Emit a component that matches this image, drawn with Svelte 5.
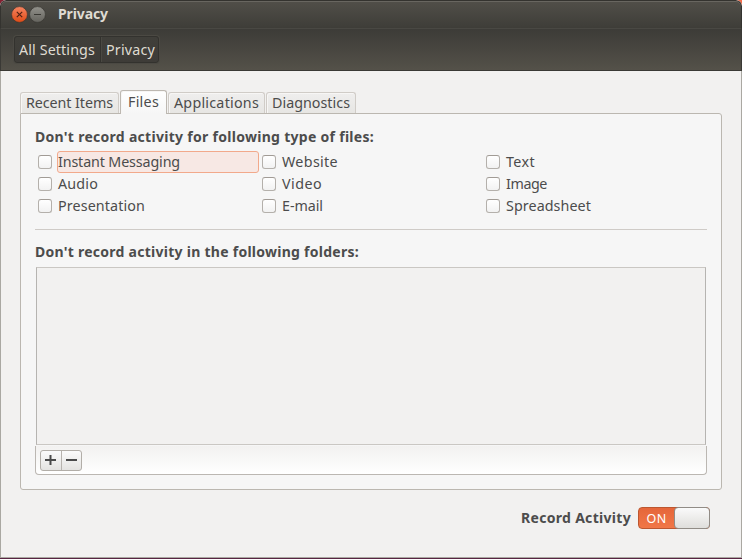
<script>
  const tabs = [
    { name: 'Recent Items', width: 99, text: 87 },
    { name: 'Files', width: 47, text: 31 },
    { name: 'Applications', width: 97, text: 85 },
    { name: 'Diagnostics', width: 90, text: 78 }
  ];
  const types = [
    ['Instant Messaging', 122], ['Website', 56], ['Text', 29],
    ['Audio', 40], ['Video', 40], ['Image', 41],
    ['Presentation', 87], ['E-mail', 41], ['Spreadsheet', 85]
  ];
  let active = $state('Files');
  let focused = $state('Instant Messaging');

  // Adjusts tracking so that a label fills its intended width.
  function fit(node, width) {
    const natural = node.getBoundingClientRect().width;
    const gap = (width - natural) / node.textContent.length;
    node.style.letterSpacing = `${gap}px`;
  }
</script>

<div class="window">
  <header class="titlebar">
    <svg class="buttons" width="36" height="18" viewBox="0 0 36 18">
      <defs>
        <linearGradient id="close" x1="0" y1="0" x2="0" y2="1"><stop offset="0" stop-color="#f68461" /><stop offset="1" stop-color="#df4b16" /></linearGradient>
        <linearGradient id="min" x1="0" y1="0" x2="0" y2="1"><stop offset="0" stop-color="#92918b" /><stop offset="1" stop-color="#64635d" /></linearGradient>
      </defs>
      <circle cx="8.5" cy="8.5" r="7.9" fill="url(#close)" stroke="#34332e" stroke-width=".6" />
      <path d="M5.8 5.8l5.4 5.4m0-5.4l-5.4 5.4" stroke="#522214" stroke-width="1.2" />
      <circle cx="26.5" cy="8.5" r="7.9" fill="url(#min)" stroke="#34332e" stroke-width=".6" />
      <path d="M23 8.5h7" stroke="#393833" stroke-width="1" />
    </svg>
    <span class="title" use:fit={50}>Privacy</span>
  </header>
  <nav class="toolbar">
    <div class="crumbs">
      <button class="first"><span use:fit={76}>All Settings</span></button>
      <button class="second"><span use:fit={49}>Privacy</span></button>
    </div>
  </nav>

  <main>
    <div class="tabs">
      {#each tabs as tab}
        <button class="tab" class:active={active === tab.name} style:width="{tab.width}px" onclick={() => (active = tab.name)}>
          <span use:fit={tab.text}>{tab.name}</span>
        </button>
      {/each}
    </div>
    <section class="panel">
      <h2><span use:fit={339}>Don't record activity for following type of files:</span></h2>
      <div class="types">
        {#each types as [name, width]}
          <label>
            <input type="checkbox" onfocus={() => (focused = name)} />
            <span class="name" class:focus={focused === name}><span use:fit={width}>{name}</span></span>
          </label>
        {/each}
      </div>
      <hr />
      <h2><span use:fit={324}>Don't record activity in the following folders:</span></h2>
      <div class="folders"></div>
      <div class="actions">
        <div class="pair">
          <button aria-label="Add"><svg width="11" height="11"><path d="M0 5h11M5.5 0v10" stroke="#4a4a4a" stroke-width="2" /></svg></button>
          <button aria-label="Remove"><svg width="11" height="11"><path d="M0 5h11" stroke="#4a4a4a" stroke-width="2" /></svg></button>
        </div>
      </div>
    </section>
    <footer>
      <span class="record" use:fit={110}>Record Activity</span>
      <div class="switch"><span class="on"><span use:fit={20}>ON</span></span><span class="knob"></span></div>
    </footer>
  </main>
</div>

<style>
  :global(body) { background: linear-gradient(90deg, #842131 0 50%, #f36c4b 50%); }
  .window, .window * { box-sizing: border-box; }
  .window {
    width: 742px; height: 559px; display: flex; flex-direction: column;
    font: 14.3px/20px "Noto Sans", sans-serif; color: #4c4c4c; white-space: nowrap;
    background: #f2f1f0; overflow: hidden;
    border-radius: 6px 6px 0 0; border-bottom: 1px solid #592442;
  }
  button { font: inherit; color: inherit; padding: 0; margin: 0; border: 0; background: none; }
  .titlebar {
    height: 28px; flex: none; display: flex; align-items: center; padding: 0 0 1px 10px;
    background: linear-gradient(#514f49, #3e3d38);
    border: solid #34332f; border-width: 1px 1px 0; border-radius: 6px 6px 0 0;
    box-shadow: inset 0 1px #686660;
  }
  .buttons { margin-right: 11px; margin-top: 1px; }
  .title { font-weight: 700; font-size: 14px; color: #dfdbd2; }
  .toolbar {
    height: 43px; flex: none; padding: 8px 0 0 13px;
    background: linear-gradient(#3c3b37, #545149);
    border: solid #3a3935; border-width: 0 1px 1px; box-shadow: inset 0 1px #494843;
  }
  .crumbs {
    display: inline-flex; height: 27px; width: 145px; border: 1px solid #33322e; border-radius: 3px;
    color: #dfdbd2; background: linear-gradient(#403f3a, #3e3c38); box-shadow: 0 0 0 1px #4b4943;
  }
  .crumbs button { text-align: left; padding-left: 5px; }
  .crumbs .first { width: 86px; padding-left: 4px; border-right: 1px solid #33322e; }
  .second { flex: 1; box-shadow: inset 1px 0 #4a4943; }
  main {
    flex: 1; display: flex; flex-direction: column; padding: 19px 19px 0;
    border: solid #aaa8a2; border-width: 0 1px 1px;
  }
  .tabs { display: flex; align-items: flex-end; gap: 1px; height: 24px; margin-bottom: -1px; position: relative; }
  .tab {
    height: 21px; margin-bottom: 1px; border: 1px solid #d0ccc7; border-bottom: 0;
    border-radius: 3px 3px 0 0; background: linear-gradient(#efeeed, #e7e6e3);
    box-shadow: inset 1px 1px #f7f6f5; text-align: center; line-height: 20px;
  }
  .tab.active {
    height: 24px; margin: 0; border-color: #bdb8b1;
    background: linear-gradient(#fff, #f6f6f6); line-height: 21px; padding-bottom: 2px;
  }
  .panel {
    width: 702px; height: 377px; border: 1px solid #bbb7b0; border-radius: 0 3px 3px 3px;
    background: #f6f6f6; padding: 13px 14px 0; flex: none;
  }
  h2 { margin: 0; font-size: 14px; font-weight: 700; line-height: 20px; height: 20px; }
  .types { display: grid; grid-template-columns: repeat(3, 224px); grid-auto-rows: 22px; padding-top: 4px; }
  label { display: flex; align-items: center; padding-left: 3px; }
  input {
    appearance: none; width: 14px; height: 14px; margin: 0 5px 0 0; border: 1px solid #b4b0ab;
    border-top-color: #a19b95; border-radius: 3px; background: linear-gradient(#fff, #f2f2f2); outline: 0;
  }
  .name { width: 202px; height: 22px; border: 1px solid transparent; border-radius: 3px; line-height: 20px; }
  .name.focus { background: #f7e8e4; border-color: #f2a98b; }
  hr { height: 1px; margin: 12px 0; border: 0; background: #cfcbc7; }
  .folders { height: 178px; margin: 5px 0 0 1px; width: 670px; border: 1px solid #b6b4b1; border-top-color: #cac7c3; border-bottom-color: #cac7c3; background: #f2f1f0; }
  .actions {
    width: 672px; height: 29px; margin-top: 1px; padding: 4px 0 0 4px; border: 1px solid #bbb7b2; border-top: 0;
    border-radius: 0 0 4px 4px; background: linear-gradient(#f2f1f0, #fff);
  }
  .pair { display: flex; width: 42px; height: 21px; border: 1px solid #b2aea8; border-radius: 3px; background: linear-gradient(#fbfbfb, #e4e3e1); }
  .pair button { flex: 1; display: flex; align-items: center; justify-content: center; }
  .pair button:first-child { padding-right: 1px; }
  .pair button + button { border-left: 1px solid #b7b3ae; }
  footer { display: flex; align-items: center; justify-content: flex-end; height: 22px; margin-top: 17px; padding-right: 12px; }
  .record { font-size: 14px; font-weight: 700; margin-right: 7px; }
  .switch { display: flex; width: 72px; height: 22px; border: 1px solid #bc5730; border-radius: 4px; background: linear-gradient(#e5663a, #f17747); }
  .on { width: 35px; text-align: center; font-size: 12.5px; color: #fff; line-height: 21px; }
  .knob { width: 36px; height: 22px; margin: -1px -1px 0 0; border: 1px solid #918c86; border-radius: 4px; background: linear-gradient(#fafafa, #dfdedb); }
</style>
